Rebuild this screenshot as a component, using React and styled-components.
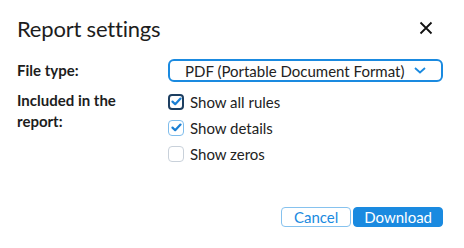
import React from 'react';
import styled, { createGlobalStyle } from 'styled-components';

const GlobalStyle = createGlobalStyle`
  body {
    margin: 0;
    background: #fff;
    font-family: Lato, "Open Sans", sans-serif;
    color: #1d1d1d;
  }
`;

const Dialog = styled.div`
  width: 464px;
  height: 248px;
  box-sizing: border-box;
  padding: 12px 21px 0 17px;
  display: flex;
  flex-direction: column;
`;

const Header = styled.div`
  display: flex;
  align-items: center;
  justify-content: space-between;
  height: 32px;
`;

const Title = styled.h2`
  margin: 0;
  font-size: 22px;
  font-weight: 400;
  letter-spacing: -0.2px;
`;

const CloseButton = styled.button`
  border: 0;
  background: none;
  padding: 0;
  margin-right: 10px;
  width: 14px;
  height: 14px;
  display: flex;
  cursor: pointer;
`;

const Form = styled.div`
  margin-top: 15px;
  display: grid;
  grid-template-columns: 151px 1fr;
  row-gap: 8px;
`;

const Label = styled.div`
  max-width: 115px;
  font-size: 15px;
  font-weight: 700;
  line-height: 21px;
  padding-top: ${(p) => p.$offset || 0}px;
`;

const Select = styled.div`
  height: 23px;
  box-sizing: border-box;
  border: 2px solid #1a8ae0;
  border-radius: 6px;
  display: flex;
  align-items: center;
  justify-content: space-between;
  padding: 0 15px 0 15px;
  font-size: 15px;
  color: #222;
`;

const Checks = styled.div`
  display: flex;
  flex-direction: column;
  gap: 9px;
  padding-top: 3px;
`;

const CheckRow = styled.label`
  display: flex;
  align-items: center;
  gap: 6px;
  height: 17px;
  font-size: 15px;
  color: #222;
`;

const Box = styled.span`
  width: 16px;
  height: 16px;
  box-sizing: border-box;
  border-radius: 4px;
  border: ${(p) =>
    p.$focus ? '2px solid #1d3f61' : p.$checked ? '1.5px solid #7fbdec' : '1.5px solid #c9d1da'};
  background: #fff;
  display: flex;
  align-items: center;
  justify-content: center;
`;

const Footer = styled.div`
  margin-top: auto;
  margin-bottom: 21px;
  display: flex;
  justify-content: flex-end;
  gap: 2px;
`;

const Button = styled.button`
  height: 20px;
  box-sizing: border-box;
  border-radius: 4px;
  font-family: Lato, sans-serif;
  font-size: 15px;
  padding: 0 ${(p) => (p.$primary ? 10 : 12)}px;
  line-height: 1;
  border: 1.5px solid ${(p) => (p.$primary ? '#1a8ae0' : '#86c2ee')};
  background: ${(p) => (p.$primary ? '#1a8ae0' : '#fff')};
  color: ${(p) => (p.$primary ? '#fff' : '#1a8ae0')};
`;

const Check = () => (
  <svg width="11" height="9" viewBox="0 0 11 9">
    <path d="M1.5 4.6 L4.2 7.2 L9.5 1.6" fill="none" stroke="#1a7fd4" strokeWidth="2.2" strokeLinecap="round" strokeLinejoin="round" />
  </svg>
);

const options = [
  { label: 'Show all rules', checked: true, focus: true },
  { label: 'Show details', checked: true },
  { label: 'Show zeros', checked: false },
];

export default function App() {
  return (
    <>
      <GlobalStyle />
      <Dialog>
        <Header>
          <Title>Report settings</Title>
          <CloseButton aria-label="Close">
            <svg width="14" height="14" viewBox="0 0 14 14">
              <path d="M1.5 1.5 L12.5 12.5 M12.5 1.5 L1.5 12.5" stroke="#111" strokeWidth="1.8" />
            </svg>
          </CloseButton>
        </Header>
        <Form>
          <Label $offset={1}>File type:</Label>
          <Select>
            <span>PDF (Portable Document Format)</span>
            <svg width="12" height="7" viewBox="0 0 12 7">
              <path d="M1 1 L6 5.5 L11 1" fill="none" stroke="#1a8ae0" strokeWidth="1.8" />
            </svg>
          </Select>
          <Label>Included in the report:</Label>
          <Checks>
            {options.map((o) => (
              <CheckRow key={o.label}>
                <Box $checked={o.checked} $focus={o.focus}>
                  {o.checked && <Check />}
                </Box>
                {o.label}
              </CheckRow>
            ))}
          </Checks>
        </Form>
        <Footer>
          <Button>Cancel</Button>
          <Button $primary>Download</Button>
        </Footer>
      </Dialog>
    </>
  );
}
